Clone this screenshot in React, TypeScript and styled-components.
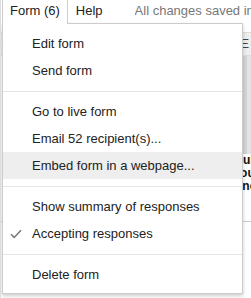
import React, {FC} from 'react';
import styled, {createGlobalStyle} from 'styled-components';

const GlobalStyle = createGlobalStyle`
  html, body {
    margin: 0;
    padding: 0;
    background: #fff;
  }
  body {
    font-family: "Liberation Sans", Arial, sans-serif;
    font-size: 13px;
    color: #222;
  }
`;

interface MenuEntry {
  label?: string;
  checked?: boolean;
  active?: boolean;
  separator?: boolean;
}

const entries: MenuEntry[] = [
  {label: 'Edit form'},
  {label: 'Send form'},
  {separator: true},
  {label: 'Go to live form'},
  {label: 'Email 52 recipient(s)...'},
  {label: 'Embed form in a webpage...', active: true},
  {separator: true},
  {label: 'Show summary of responses'},
  {label: 'Accepting responses', checked: true},
  {separator: true},
  {label: 'Delete form'},
];

const CheckMark: FC = () => (
  <svg width="12" height="10" viewBox="0 0 12 10">
    <path d="M1 5.2 L4.2 8.4 L11 1.2" fill="none" stroke="#777" strokeWidth="1.5"/>
  </svg>
);

const App: FC = () => {
  return <Page>
    <GlobalStyle/>
    <MenuBar>
      <MenuTab open>Form (6)</MenuTab>
      <MenuTab>Help</MenuTab>
      <SaveStatus>All changes saved in</SaveStatus>
    </MenuBar>

    <Sheet>
      <Toolbar><ToolGlyph>Ξ</ToolGlyph></Toolbar>
      <SheetBody>
        <GrayPanel/>
        <CellText>Multiple<br/>Your<br/>One</CellText>
      </SheetBody>
    </Sheet>

    <Dropdown>
      {entries.map((e, i) => e.separator
        ? <Separator key={i}/>
        : <Item key={i} $active={e.active}>
          {e.checked && <CheckSlot><CheckMark/></CheckSlot>}
          {e.label}
        </Item>)}
    </Dropdown>
  </Page>;
};

export default App;

const Page = styled.div`
  position: relative;
  width: 251px;
  height: 298px;
  overflow: hidden;
  background: #fff;
  border-left: 1px solid #ddd;
  box-sizing: border-box;
`;

const MenuBar = styled.div`
  display: flex;
  align-items: stretch;
  height: 23px;
  padding-left: 1px;
  white-space: nowrap;
`;

const MenuTab = styled.div<{open?: boolean}>`
  position: relative;
  z-index: 3;
  display: flex;
  align-items: center;
  height: 24px;
  padding: 0 7px 3px 7px;
  box-sizing: border-box;
  border: 1px solid ${props => props.open ? 'rgba(0,0,0,0.2)' : 'transparent'};
  border-top: none;
  border-bottom: none;
  background: ${props => props.open ? '#fff' : 'transparent'};
  font-size: 13px;
  color: #222;
`;

const SaveStatus = styled.div`
  display: flex;
  align-items: center;
  padding-bottom: 3px;
  margin-left: 24px;
  font-size: 13px;
  color: #777;
  overflow: hidden;
`;

const Sheet = styled.div`
  padding-top: 9px;
`;

const Toolbar = styled.div`
  display: flex;
  justify-content: flex-end;
  align-items: center;
  height: 22px;
  background: #eee;
  border-top: 1px solid #ddd;
  border-bottom: 1px solid #ddd;
  padding-right: 2px;
`;

const ToolGlyph = styled.span`
  font-size: 12px;
  color: #444;
`;

const SheetBody = styled.div`
  display: flex;
  flex-direction: column;
  align-items: flex-end;
`;

const GrayPanel = styled.div`
  width: 8px;
  height: 98px;
  background: linear-gradient(to right, #d4d4d4 50%, #e4e4e4 50%);
`;

const CellText = styled.div`
  align-self: stretch;
  padding-left: 232px;
  padding-bottom: 28px;
  border-bottom: 1px solid #ccc;
  white-space: nowrap;
  overflow: hidden;
  font-weight: bold;
  font-size: 12px;
  line-height: 13px;
  color: #111;
`;

const Dropdown = styled.div`
  position: absolute;
  z-index: 2;
  left: 1px;
  top: 23px;
  width: 241px;
  box-sizing: border-box;
  padding: 6px 0 5px;
  background: #fff;
  border: 1px solid rgba(0,0,0,0.2);
  box-shadow: 0 2px 4px rgba(0,0,0,0.2);
`;

const Item = styled.div<{$active?: boolean}>`
  position: relative;
  height: 27px;
  line-height: 28px;
  padding-left: 29px;
  font-size: 13px;
  color: #222;
  white-space: nowrap;
  background: ${props => props.$active ? '#eee' : 'transparent'};
`;

const CheckSlot = styled.span`
  position: absolute;
  left: 7px;
  top: 9px;
  display: flex;
`;

const Separator = styled.div`
  height: 1px;
  margin: 7px 0 6px;
  background: #e5e5e5;
`;
